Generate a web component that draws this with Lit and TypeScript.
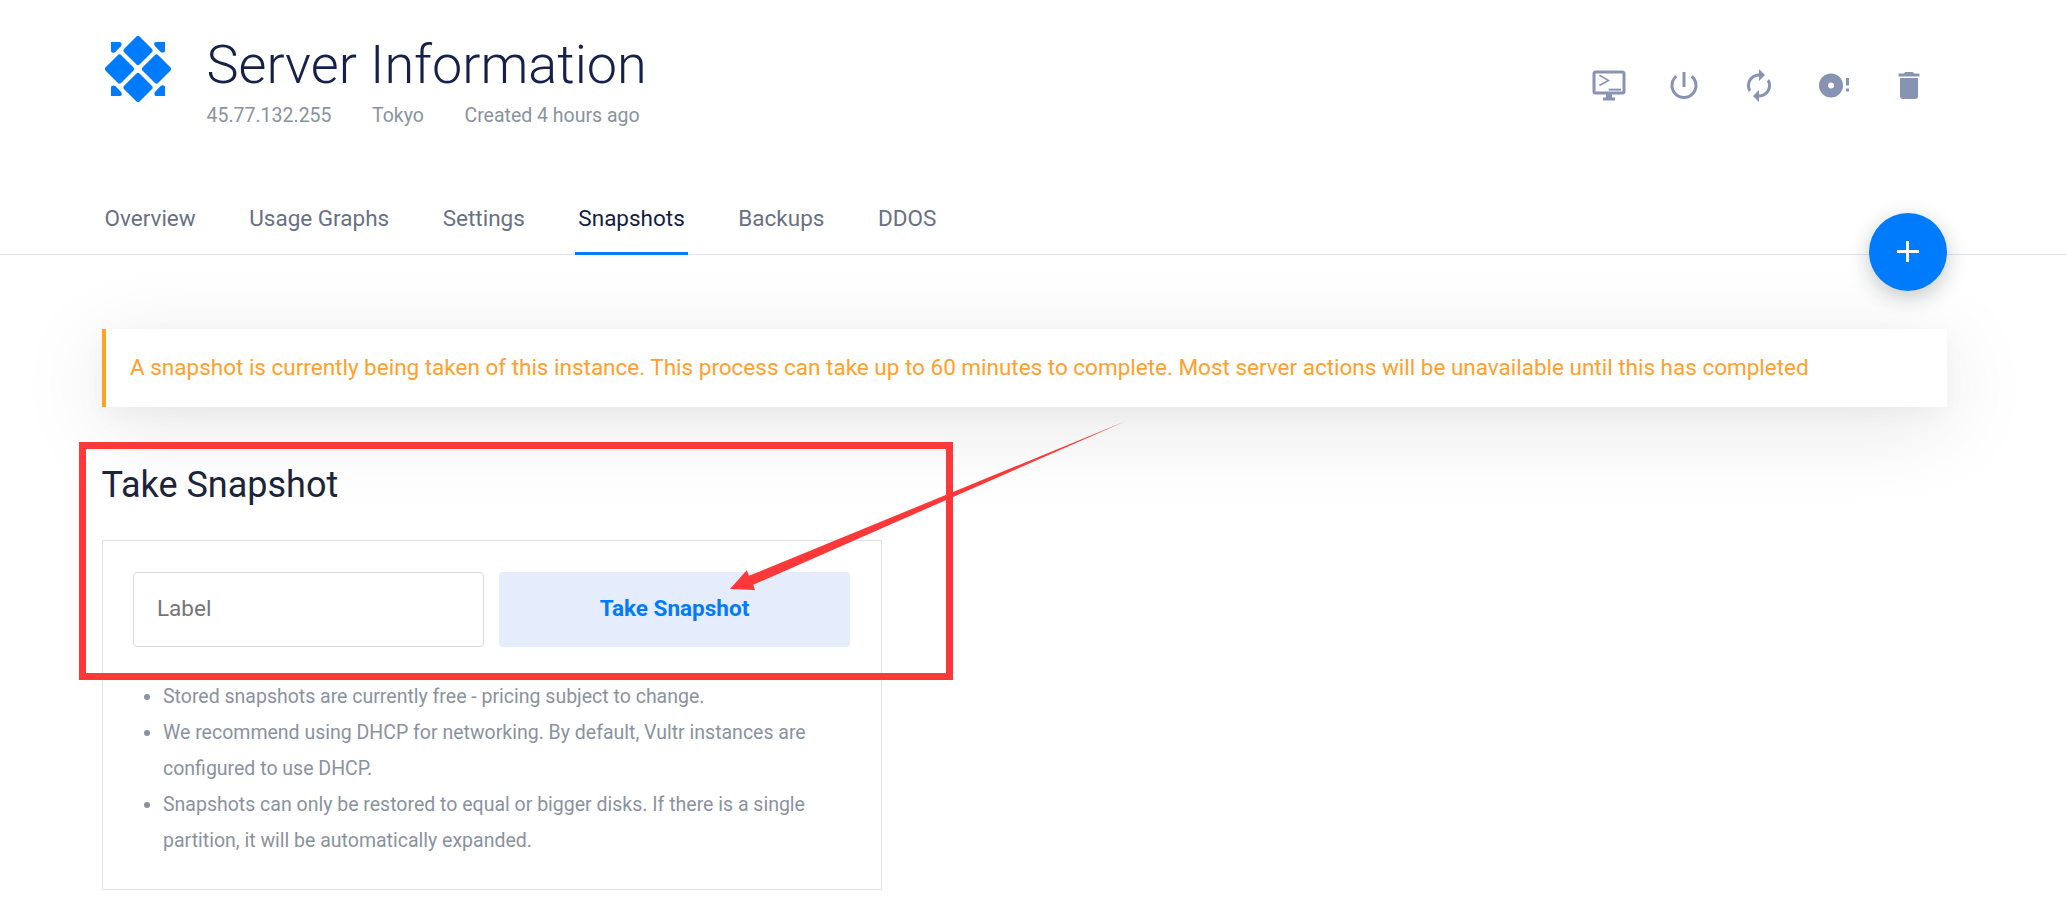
import { LitElement, html, css, svg } from "lit";
import { customElement, state } from "lit/decorators.js";
import { classMap } from "lit/directives/class-map.js";

const ACTIONS = [
  {
    name: "View console",
    art: svg`<path d="M21,16H3V4H21M21,2H3C1.89,2 1,2.89 1,4V16A2,2 0 0,0 3,18H10V20H8V22H16V20H14V18H21A2,2 0 0,0 23,16V4C23,2.89 22.1,2 21,2"/><path d="M5.6 5.2L11.6 8.6L5.6 12" fill="none" stroke="currentColor" stroke-width="1.1"/><path d="M11.8 14.1H20V15.4H11.8Z"/>`,
  },
  {
    name: "Stop server",
    art: svg`<path d="M13 3h-2v10h2V3zm4.83 2.17l-1.42 1.42C17.99 7.86 19 9.81 19 12c0 3.87-3.13 7-7 7s-7-3.13-7-7c0-2.19 1.01-4.14 2.58-5.42L6.17 5.17C4.23 6.82 3 9.26 3 12c0 4.97 4.03 9 9 9s9-4.03 9-9c0-2.74-1.23-5.18-3.17-6.83z"/>`,
  },
  {
    name: "Restart server",
    art: svg`<path d="M12 6v3l4-4-4-4v3c-4.42 0-8 3.58-8 8 0 1.57.46 3.03 1.24 4.26L6.7 14.8c-.45-.83-.7-1.79-.7-2.8 0-3.31 2.69-6 6-6zm6.76 1.74L17.3 9.2c.44.84.7 1.79.7 2.8 0 3.31-2.69 6-6 6v-3l-4 4 4 4v-3c4.42 0 8-3.58 8-8 0-1.57-.46-3.03-1.24-4.26z"/>`,
  },
  {
    name: "Reinstall server",
    art: svg`<path d="M10,14C8.89,14 8,13.1 8,12C8,10.89 8.89,10 10,10A2,2 0 0,1 12,12A2,2 0 0,1 10,14M10,4A8,8 0 0,0 2,12A8,8 0 0,0 10,20A8,8 0 0,0 18,12A8,8 0 0,0 10,4M20,12H22V7H20M20,16H22V14H20V16Z"/>`,
  },
  {
    name: "Destroy server",
    art: svg`<path d="M19,4H15.5L14.5,3H9.5L8.5,4H5V6H19M6,19A2,2 0 0,0 8,21H16A2,2 0 0,0 18,19V7H6V19Z"/>`,
  },
];

const TABS = ["Overview", "Usage Graphs", "Settings", "Snapshots", "Backups", "DDOS"];

const NOTES = [
  "Stored snapshots are currently free - pricing subject to change.",
  "We recommend using DHCP for networking. By default, Vultr instances are configured to use DHCP.",
  "Snapshots can only be restored to equal or bigger disks. If there is a single partition, it will be automatically expanded.",
];

@customElement("server-header")
class ServerHeader extends LitElement {
  static styles = css`
    :host {
      display: flex;
      height: 189px;
      padding: 0 140px 0 105px;
      box-sizing: border-box;
      align-items: flex-start;
    }
    .logo { width: 66px; height: 66px; margin-top: 36px; flex: none; fill: #007bfc; }
    .info { margin: 33px 0 0 35.5px; flex: 1; }
    .title {
      margin: 0;
      font-size: 54px;
      line-height: 64px;
      font-weight: 300;
      color: #16214a;
      white-space: nowrap;
    }
    .meta {
      display: flex;
      gap: 40.5px;
      margin-top: 4px;
      font-size: 19.5px;
      line-height: 30px;
      color: #8a929e;
    }
    .actions { display: flex; gap: 39px; margin-top: 67px; color: #8793b3; }
    .action { width: 36px; height: 36px; fill: currentColor; display: block; }
  `;
  render() {
    return html`
      <svg class="logo" viewBox="0 0 66 66">
        ${[[33, 14.5], [14.5, 33], [51.5, 33], [33, 51.5]].map(
          ([x, y]) => svg`<rect x="-11" y="-11" width="22" height="22" rx="2.5" transform="translate(${x} ${y}) rotate(45)"/>`
        )}
        ${[0, 90, 180, 270].map(
          (a) => svg`<path transform="rotate(${a} 33 33)" d="M6 6H15Q16.6 6 16.6 8.6Q16.6 9.6 15.9 10.3L10.3 15.9Q9.3 16.8 8 16.8Q6 16.8 6 15Z"/>`
        )}
      </svg>
      <div class="info">
        <h1 class="title">Server Information</h1>
        <div class="meta"><span>45.77.132.255</span><span>Tokyo</span><span>Created 4 hours ago</span></div>
      </div>
      <div class="actions">
        ${ACTIONS.map((a) => html`<svg class="action" viewBox="0 -0.333 24 24" aria-label=${a.name}>${a.art}</svg>`)}
      </div>
    `;
  }
}

@customElement("server-tabs")
class ServerTabs extends LitElement {
  @state() active = "Snapshots";
  static styles = css`
    :host {
      display: block;
      position: relative;
      z-index: 1;
      height: 66px;
      box-sizing: border-box;
      border-bottom: 1px solid #e1e3ea;
    }
    .tabs { display: flex; gap: 46.5px; padding-left: 101px; height: 66px; }
    .tab {
      height: 66px;
      box-sizing: border-box;
      padding: 14px 3.5px 0;
      font-size: 22.5px;
      line-height: 30px;
      color: #697083;
      cursor: pointer;
      white-space: nowrap;
      border-bottom: 3px solid transparent;
    }
    .active { color: #141c45; border-color: #007bfc; }
    .add {
      position: absolute;
      right: 120px;
      top: 24px;
      width: 78px;
      height: 78px;
      border-radius: 50%;
      background: #007bfc;
      box-shadow: 0 6px 21px rgba(10, 25, 30, 0.24);
      display: flex;
      align-items: center;
      justify-content: center;
    }
    .plus { width: 22px; height: 22px; stroke: #fff; stroke-width: 3; }
  `;
  render() {
    return html`
      <div class="tabs">
        ${TABS.map(
          (t) => html`<div class=${classMap({ tab: true, active: t === this.active })} @click=${() => (this.active = t)}>${t}</div>`
        )}
      </div>
      <div class="add"><svg class="plus" viewBox="0 0 22 22"><path d="M0 10.5H22M10.5 0V21"/></svg></div>
    `;
  }
}

@customElement("snapshot-panel")
class SnapshotPanel extends LitElement {
  static styles = css`
    :host {
      display: block;
      width: 780px;
      height: 350px;
      box-sizing: border-box;
      border: 1px solid #e1e3e9;
      padding: 31px 31px 0 30px;
    }
    .form { display: grid; grid-template-columns: 1fr 1fr; gap: 15px; }
    .label, .submit {
      height: 75px;
      box-sizing: border-box;
      border-radius: 4px;
      font: 400 22.5px Roboto, sans-serif;
    }
    .label { border: 1px solid #dcdcdc; padding: 0 23px 4px; width: 100%; background: #fff; outline: none; }
    .label::placeholder { color: #757575; opacity: 1; }
    .submit { border: 0; padding: 0 0 4px; background: #e5ecfc; color: #007bfc; font-weight: 700; }
    .notes { margin: 32px 0 0; padding: 0 0 0 30px; list-style: none; color: #8a929e; font-size: 19.5px; line-height: 36px; }
    .note { display: flex; }
    .note::before {
      content: "";
      flex: none;
      width: 6px;
      height: 6px;
      border-radius: 50%;
      background: currentColor;
      margin: 15px 13px 0 -19px;
    }
  `;
  render() {
    return html`
      <div class="form">
        <input class="label" placeholder="Label" />
        <button class="submit">Take Snapshot</button>
      </div>
      <ul class="notes">
        ${NOTES.map((n) => html`<li class="note">${n}</li>`)}
      </ul>
    `;
  }
}

@customElement("app-root")
class AppRoot extends LitElement {
  static styles = css`
    :host {
      display: block;
      position: relative;
      height: 916px;
      overflow: hidden;
      background: #fff;
      font-family: Roboto, sans-serif;
    }
    .content { padding: 74px 120px 0 102px; }
    .alert {
      height: 78px;
      box-sizing: border-box;
      border-left: 4px solid #ffa226;
      padding-left: 24px;
      background: #fff;
      color: #ffa02e;
      font-size: 22.5px;
      line-height: 77px;
      letter-spacing: -0.006px;
      white-space: nowrap;
      box-shadow: 0 18px 90px rgba(0, 0, 0, 0.1), 0 7px 22px rgba(0, 40, 30, 0.03);
    }
    .heading {
      position: relative;
      margin: 54px 0 31px -0.5px;
      font-size: 36px;
      line-height: 48px;
      font-weight: 400;
      color: #1b2439;
    }
    .marks { position: absolute; left: 0; top: 0; width: 2067px; height: 916px; pointer-events: none; z-index: 2; }
  `;
  render() {
    return html`
      <server-header></server-header>
      <server-tabs></server-tabs>
      <main class="content">
        <div class="alert">A snapshot is currently being taken of this instance. This process can take up to 60 minutes to complete. Most server actions will be unavailable until this has completed</div>
        <h2 class="heading">Take Snapshot</h2>
        <snapshot-panel></snapshot-panel>
      </main>
      <svg class="marks" viewBox="0 0 2067 916">
        <rect x="82.5" y="445.5" width="867" height="231" fill="none" stroke="#fc3838" stroke-width="7" />
        <path d="M730 589L746.7 570.3L749 575.8L1126 421L753.2 584.8L755 590Z" fill="#fc3838" />
      </svg>
    `;
  }
}
